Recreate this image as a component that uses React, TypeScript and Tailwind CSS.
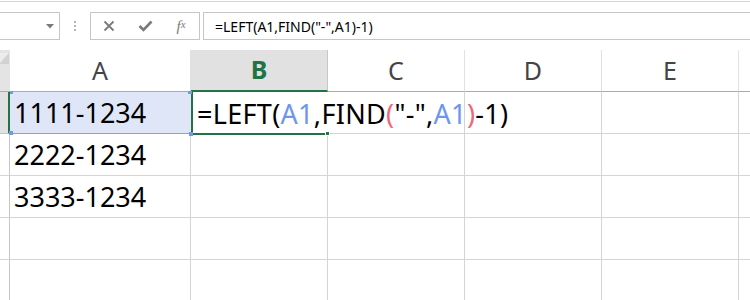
import React from "react";

function Triangle() {
  return (
    <svg width="8" height="5" viewBox="0 0 8 5">
      <polygon points="0,0 8,0 4,4.5" fill="#7a7a7a" />
    </svg>
  );
}

function XIcon() {
  return (
    <svg width="12" height="12" viewBox="0 0 12 12">
      <path d="M1.5 1.5 L10.5 10.5 M10.5 1.5 L1.5 10.5" stroke="#7a7a7a" strokeWidth="1.8" fill="none" />
    </svg>
  );
}

function CheckIcon() {
  return (
    <svg width="15" height="12" viewBox="0 0 15 12">
      <path d="M1.5 6 L5.5 10 L13.5 1.5" stroke="#7a7a7a" strokeWidth="2.6" fill="none" />
    </svg>
  );
}

const F = () => (
  <>
    =LEFT(<span className="text-[#6e95f0]">A1</span>,FIND<span className="text-[#ee6878]">(</span>"-",
    <span className="text-[#6e95f0]">A1</span>
    <span className="text-[#ee6878]">)</span>-1)
  </>
);

export default function App() {
  const body = [["2222-1234"], ["3333-1234"], [""], [""]];
  return (
    <div className="w-[750px] h-[300px] bg-white overflow-hidden font-['Noto_Sans',sans-serif] text-black">
      <div className="mt-px h-px bg-[#d6d6d6]" />
      {/* toolbar */}
      <div className="mt-[10px] flex h-[28px]">
        <div className="w-[60px] border border-l-0 border-[#c6c6c6] flex items-center justify-end pr-[5px]">
          <Triangle />
        </div>
        <div className="w-[30px] flex flex-col items-center justify-center gap-[2px]">
          <div className="w-[2px] h-[2px] bg-[#b5b5b5]" />
          <div className="w-[2px] h-[2px] bg-[#b5b5b5]" />
          <div className="w-[2px] h-[2px] bg-[#b5b5b5]" />
        </div>
        <div className="w-[110px] border border-[#c6c6c6] flex items-center">
          <div className="w-[36px] flex justify-center">
            <XIcon />
          </div>
          <div className="w-[36px] flex justify-center">
            <CheckIcon />
          </div>
          <div className="w-[36px] flex justify-center font-['Liberation_Serif',serif] italic text-[#7a7a7a] text-[15px] leading-none">
            f<span className="text-[11px]">x</span>
          </div>
        </div>
        <div className="ml-[3px] flex-1 border border-r-0 border-[#c6c6c6] flex items-center pl-[11px] text-[14px] whitespace-nowrap">
          =LEFT(A1,FIND("-",A1)-1)
        </div>
      </div>
      {/* grid */}
      <div className="mt-[10px] grid grid-cols-[10px_181px_137px_137px_137px_137px_1fr] auto-rows-[42px]">
        {/* header row */}
        <div className="bg-[#e4e4e4] border-b border-[#ababab] relative overflow-hidden">
          <svg className="absolute left-0 top-0" width="9" height="14" viewBox="0 0 9 14">
            <polygon points="0,3 0,14 9,14 9,3" fill="#d2d2d2" />
            <polygon points="0,3 9,3 0,13" fill="#ececec" />
          </svg>
        </div>
        <div className="border-r border-b border-r-[#e1e1e1] border-b-[#ababab] flex items-center justify-center text-[25px] text-[#444]">A</div>
        <div className="bg-[#e1e1e1] border-r border-r-[#c6c6c6] border-b-2 border-b-[#217346] flex items-center justify-center text-[25px] font-bold text-[#217346]">B</div>
        <div className="border-r border-b border-r-[#e1e1e1] border-b-[#ababab] flex items-center justify-center text-[25px] text-[#444]">C</div>
        <div className="border-r border-b border-r-[#e1e1e1] border-b-[#ababab] flex items-center justify-center text-[25px] text-[#444]">D</div>
        <div className="border-r border-b border-r-[#e1e1e1] border-b-[#ababab] flex items-center justify-center text-[25px] text-[#444]">E</div>
        <div className="border-b border-b-[#ababab]" />

        {/* row 1 */}
        <div className="bg-[#e1e1e1] border-r-2 border-r-[#217346] border-b border-b-[#c6c6c6]" />
        <div className="relative bg-[#dfe6f7] border-b border-b-[#7fa3ea] flex items-center pl-[4px] text-[27px] leading-none">
          1111-1234
          <div className="absolute left-0 -top-[1px] w-[3px] h-[3px] bg-[#6f9ae8]" />
          <div className="absolute -left-[1px] -bottom-[2px] w-[4px] h-[4px] bg-[#6f9ae8]" />
          <div className="absolute right-0 -top-[1px] w-[3px] h-[3px] bg-[#6f9ae8]" />
        </div>
        <div className="relative z-10 border-l-2 border-l-[#217346] flex items-center pl-[4px] text-[27px] leading-none whitespace-nowrap">
          <span className="tracking-[0.3px]">
            <F />
          </span>
          <span className="inline-block ml-[2px] w-px h-[40px] bg-black" />
          <div className="absolute -left-[2px] right-[2px] -bottom-px h-[2px] bg-[#217346]" />
          <div className="absolute -right-[2px] -bottom-[2px] w-[5px] h-[5px] bg-[#217346] border border-white" />
          <div className="absolute -left-[4px] -top-[1px] w-[3px] h-[3px] bg-[#6f9ae8]" />
          <div className="absolute -left-[4px] -bottom-[2px] w-[4px] h-[4px] bg-[#6f9ae8]" />
        </div>
        <div className="border-r border-b border-[#d4d4d4]" />
        <div className="border-r border-b border-[#d4d4d4]" />
        <div className="border-r border-b border-[#d4d4d4]" />
        <div className="border-b border-[#d4d4d4]" />

        {body.map((r, i) => (
          <React.Fragment key={i}>
            <div className="border-r border-b border-r-[#c6c6c6] border-b-[#d4d4d4]" />
            <div className="border-r border-b border-[#d4d4d4] flex items-center pl-[4px] text-[27px] leading-none">{r[0]}</div>
            <div className="border-r border-b border-[#d4d4d4]" />
            <div className="border-r border-b border-[#d4d4d4]" />
            <div className="border-r border-b border-[#d4d4d4]" />
            <div className="border-r border-b border-[#d4d4d4]" />
            <div className="border-b border-[#d4d4d4]" />
          </React.Fragment>
        ))}
      </div>
    </div>
  );
}
